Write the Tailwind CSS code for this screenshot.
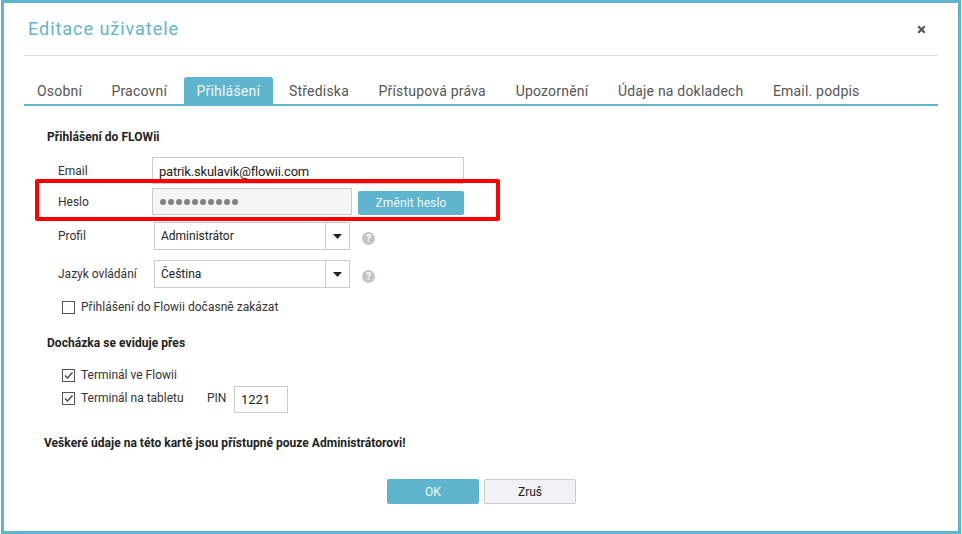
<!DOCTYPE html>
<html lang="en">

<head>
  <meta charset="UTF-8" />
  <title>Editace uživatele</title>
  <script src="https://cdn.jsdelivr.net/npm/@tailwindcss/browser@4"></script>
</head>

<body class="bg-white overflow-hidden font-['Roboto',sans-serif] text-[#333333] text-[12px]">
  <!-- Dialog -->
  <div class="relative h-[534px] w-[960px] ml-px border-[3px] border-[#5fb4ce] bg-white px-[20px]">

    <!-- Header -->
    <div class="flex items-center justify-between h-[53px] border-b border-[#dddddd] pl-[4px] pr-[12px]">
      <h1 class="text-[18px] leading-[52px] tracking-[0.96px] text-[#62b4cf]">Editace uživatele</h1>
      <svg width="9" height="9" viewBox="0 0 9 9">
        <path d="M1.3 1.3 7.7 7.7M7.7 1.3 1.3 7.7" stroke="#555555" stroke-width="2.3" />
      </svg>
    </div>

    <!-- Tabs -->
    <div class="flex h-[29px] mt-[21px] border-b-2 border-[#5fb4ce] text-[14px] text-[#555555] leading-[28px] tracking-[0.2px]">
      <div class="ml-[13px]">Osobní</div>
      <div class="ml-[29.3px]">Pracovní</div>
      <div class="ml-[16.4px] w-[89px] h-[27px] pl-[13px] rounded-t-[3px] bg-[#5fb4ce] text-white/90">Přihlášení</div>
      <div class="ml-[16.5px]">Střediska</div>
      <div class="ml-[29.45px]">Přístupová práva</div>
      <div class="ml-[29.8px]">Upozornění</div>
      <div class="ml-[29.5px]">Údaje na dokladech</div>
      <div class="ml-[29.4px]">Email. podpis</div>
    </div>

    <!-- Login section -->
    <div class="pl-[23px] mt-[23px]">
      <h2 class="font-bold h-[16px] leading-[16px] tracking-[0.05px] text-[#222222]">Přihlášení do FLOWii</h2>

      <div class="flex items-center mt-[12px] h-[27px]">
        <label class="w-[105px] pl-[11px]">Email</label>
        <div class="w-[312px] h-[27px] pl-[6px] border border-[#cccccc] text-[13px] leading-[27px] tracking-[-0.18px] text-[#222222]">patrik.skulavik@flowii.com</div>
      </div>

      <div class="flex items-center mt-[4px] h-[27px]">
        <label class="w-[105px] pl-[11px]">Heslo</label>
        <div class="flex items-center gap-[2px] w-[200px] h-[27px] pl-[7px] border border-[#cccccc] bg-[#f4f4f4]">
          <span class="w-[6px] h-[6px] rounded-full bg-[#808080]"></span>
          <span class="w-[6px] h-[6px] rounded-full bg-[#808080]"></span>
          <span class="w-[6px] h-[6px] rounded-full bg-[#808080]"></span>
          <span class="w-[6px] h-[6px] rounded-full bg-[#808080]"></span>
          <span class="w-[6px] h-[6px] rounded-full bg-[#808080]"></span>
          <span class="w-[6px] h-[6px] rounded-full bg-[#808080]"></span>
          <span class="w-[6px] h-[6px] rounded-full bg-[#808080]"></span>
          <span class="w-[6px] h-[6px] rounded-full bg-[#808080]"></span>
          <span class="w-[6px] h-[6px] rounded-full bg-[#808080]"></span>
          <span class="w-[6px] h-[6px] rounded-full bg-[#808080]"></span>
        </div>
        <button class="ml-[6px] mt-[2px] w-[106px] h-[24px] rounded-[2px] bg-[#5fb4ce] text-white/90 text-[12px] tracking-[0.12px]">Změnit heslo</button>
      </div>

      <div class="flex items-center mt-[7px] h-[28px]">
        <label class="w-[107px] pl-[11px]">Profil</label>
        <div class="flex w-[196px] h-[28px] border border-[#cccccc] text-[#222222] leading-[26px]">
          <div class="flex-1 pl-[6px] border-r border-[#cccccc]">Administrátor</div>
          <div class="flex items-center justify-center w-[23px]">
            <svg width="9" height="5" viewBox="0 0 9 5"><path d="M0 0h9L4.5 5z" fill="#222222" /></svg>
          </div>
        </div>
        <svg width="13" height="13" viewBox="0 0 13 13" class="ml-[12px] mt-[5px]">
          <circle cx="6.5" cy="6.5" r="6.5" fill="#c4c4c4" />
          <text x="6.5" y="10" text-anchor="middle" font-size="10" font-weight="700" font-family="Roboto" fill="#ffffff">?</text>
        </svg>
      </div>

      <div class="flex items-center mt-[10px] h-[28px]">
        <label class="w-[107px] pl-[11px]">Jazyk ovládání</label>
        <div class="flex w-[196px] h-[28px] border border-[#cccccc] text-[#222222] leading-[26px]">
          <div class="flex-1 pl-[6px] border-r border-[#cccccc]">Čeština</div>
          <div class="flex items-center justify-center w-[23px]">
            <svg width="9" height="5" viewBox="0 0 9 5"><path d="M0 0h9L4.5 5z" fill="#222222" /></svg>
          </div>
        </div>
        <svg width="13" height="13" viewBox="0 0 13 13" class="ml-[12px] mt-[5px]">
          <circle cx="6.5" cy="6.5" r="6.5" fill="#c4c4c4" />
          <text x="6.5" y="10" text-anchor="middle" font-size="10" font-weight="700" font-family="Roboto" fill="#ffffff">?</text>
        </svg>
      </div>

      <div class="flex items-center mt-[11px] ml-[15px] h-[16px]">
        <span class="w-[13px] h-[13px] border border-[#555555] bg-white"></span>
        <span class="ml-[6px] tracking-[0.02px]">Přihlášení do Flowii dočasně zakázat</span>
      </div>
    </div>

    <!-- Attendance section -->
    <div class="pl-[23px] mt-[20px]">
      <h2 class="font-bold h-[16px] leading-[16px] tracking-[0.05px] text-[#222222]">Docházka se eviduje přes</h2>

      <div class="flex items-center mt-[16px] ml-[15px] h-[16px]">
        <span class="flex w-[13px] h-[13px] border border-[#555555] bg-white">
          <svg width="11" height="11" viewBox="0 0 11 11"><path d="M2 5.5 4.5 8 9.5 2.5" fill="none" stroke="#444444" stroke-width="1.3" /></svg>
        </span>
        <span class="ml-[6px]">Terminál ve Flowii</span>
      </div>

      <div class="flex items-center mt-[3px] ml-[15px] h-[27px]">
        <span class="flex w-[13px] h-[13px] border border-[#555555] bg-white -mt-[3px]">
          <svg width="11" height="11" viewBox="0 0 11 11"><path d="M2 5.5 4.5 8 9.5 2.5" fill="none" stroke="#444444" stroke-width="1.3" /></svg>
        </span>
        <span class="ml-[6px] w-[110px] -mt-[3px]">Terminál na tabletu</span>
        <span class="ml-[16px] w-[27px] -mt-[3px]">PIN</span>
        <div class="w-[54px] h-[27px] pl-[6px] border border-[#cccccc] text-[13px] leading-[26px] text-[#222222]">1221</div>
      </div>
    </div>

    <p class="pl-[20px] mt-[22px] h-[16px] font-bold leading-[16px] tracking-[0.03px] text-[#222222]">Veškeré údaje na této kartě jsou přístupné pouze Administrátorovi!</p>

    <!-- Footer buttons -->
    <div class="flex pl-[363px] mt-[28px] gap-[5px]">
      <button class="w-[92px] h-[25px] rounded-[2px] bg-[#5fb4ce] text-white/90">OK</button>
      <button class="w-[92px] h-[25px] rounded-[2px] border border-[#cccccc] bg-[#f1f2f6] text-[#222222]">Zruš</button>
    </div>

    <!-- Red highlight over the password row -->
    <div class="absolute left-[31px] top-[176px] w-[465px] h-[42px] border-4 border-[#ff0000] rounded-[2px]"></div>
  </div>
</body>

</html>
